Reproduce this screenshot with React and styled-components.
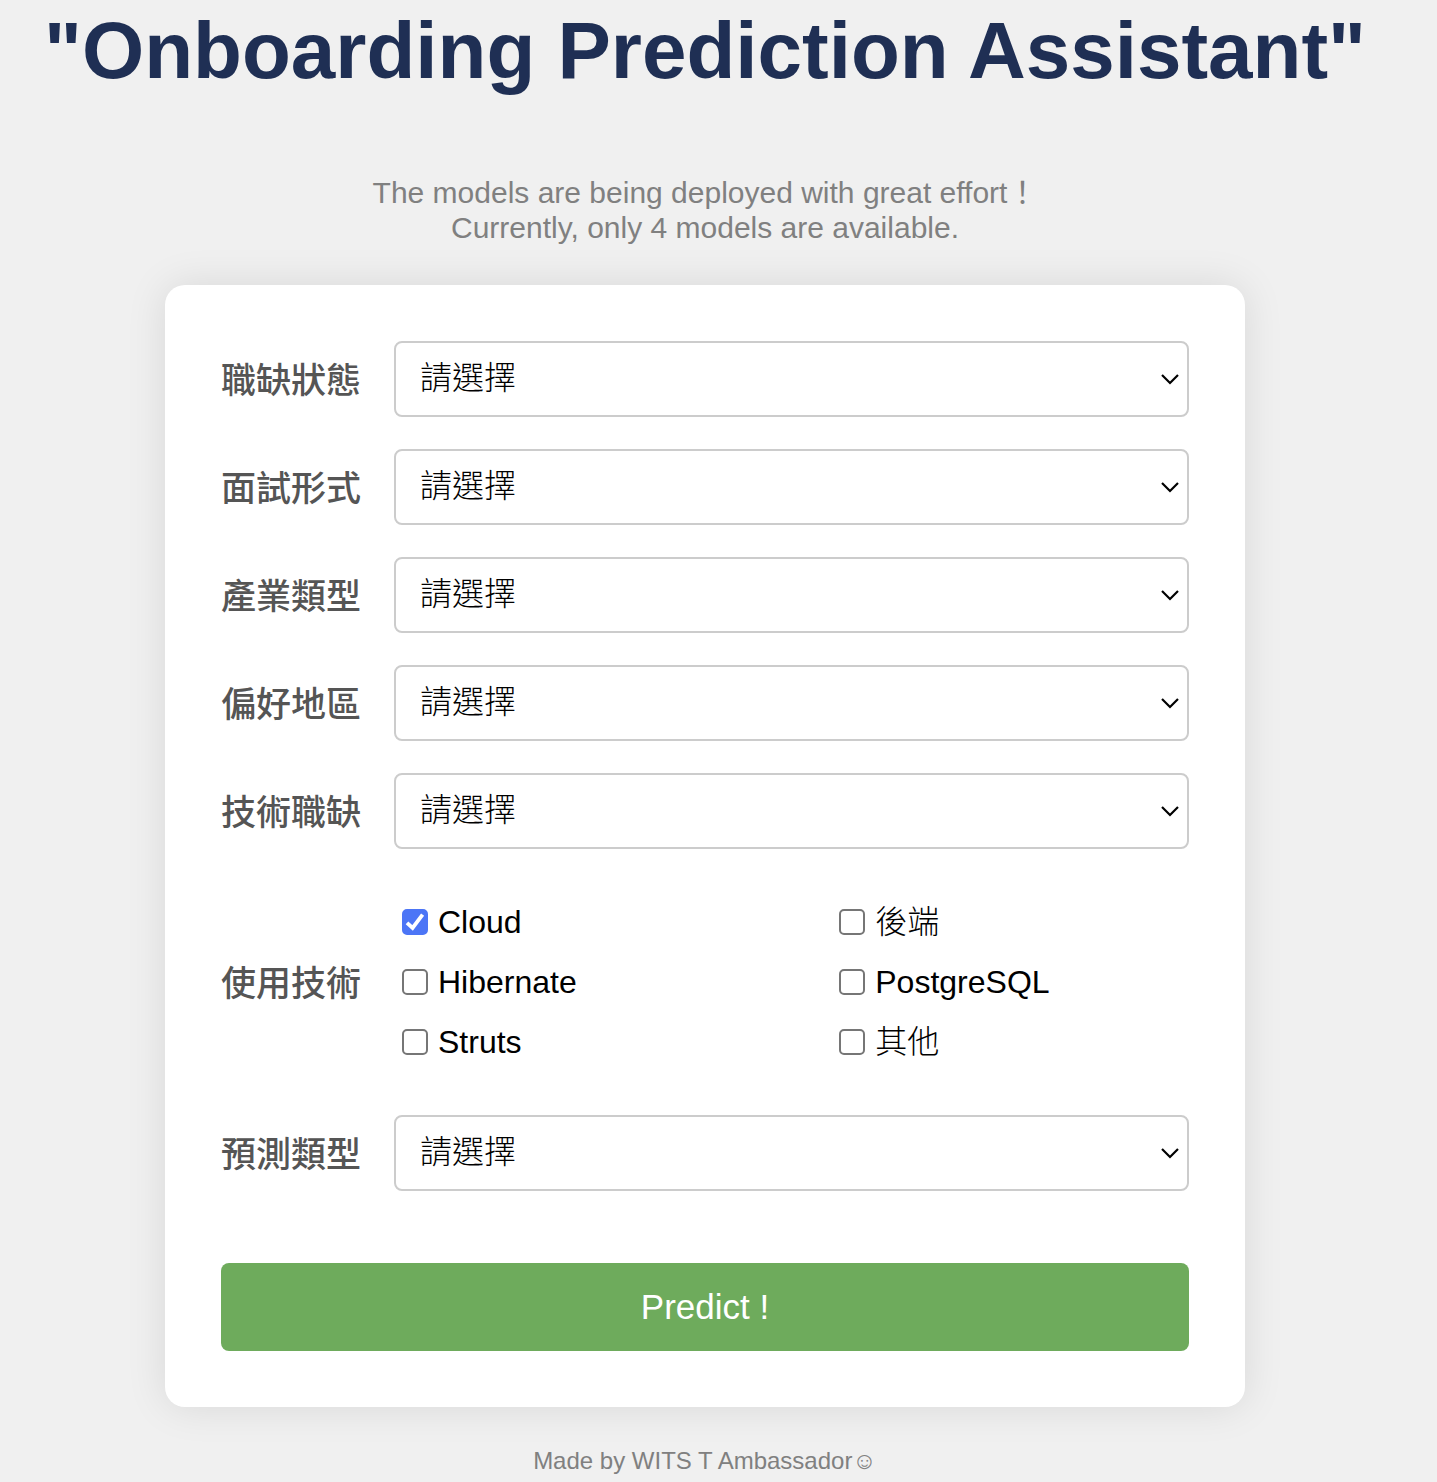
import React, { useState } from "react";
import styled, { createGlobalStyle } from "styled-components";

const GlobalStyle = createGlobalStyle`
  *, *::before, *::after { box-sizing: border-box; }
  body {
    margin: 0;
    background: #f0f0f0;
    color: #000;
    font-family: Arial, "Liberation Sans", "Noto Sans CJK TC", sans-serif;
  }
`;

const Page = styled.div`
  display: flex;
  flex-direction: column;
  align-items: center;
  padding: 5px 27px 0 0;
`;

const Title = styled.h1`
  margin: 0;
  color: #1f2f54;
  font-size: 80px;
  font-weight: 700;
  line-height: 92px;
  text-align: center;
`;

const Notice = styled.p`
  margin: 78px 0 40px;
  color: #808080;
  font-size: 30px;
  line-height: 35px;
  text-align: center;
`;

const Card = styled.form`
  display: flex;
  flex-direction: column;
  gap: 32px;
  width: 100%;
  max-width: 1080px;
  padding: 56px;
  background: #fff;
  border-radius: 20px;
  box-shadow: 0 0 40px rgba(0, 0, 0, 0.1);
`;

const Row = styled.div`
  display: grid;
  grid-template-columns: 173px minmax(0, 1fr);
  align-items: center;
`;

const Label = styled.label`
  padding-top: 4px;
  color: #555;
  font-size: 35px;
  font-weight: 500;
  line-height: 40px;
`;

const SelectBox = styled.div`
  position: relative;
`;

const Select = styled.select`
  display: block;
  width: 100%;
  height: 76px;
  padding: 0 24px 2px;
  appearance: none;
  color: #000;
  background: #fff;
  border: 2px solid #ccc;
  border-radius: 8px;
  font-family: inherit;
  font-size: 32px;
  font-weight: 300;
`;

const Chevron = styled.svg`
  position: absolute;
  top: 50%;
  right: 9px;
  width: 20px;
  height: 12px;
  margin-top: -6px;
  pointer-events: none;
`;

const Options = styled.div`
  display: grid;
  grid-template-columns: 55% 45%;
  padding: 11px 0;
`;

const Option = styled.label`
  display: flex;
  align-items: center;
  gap: 10px;
  height: 60px;
  padding-left: 8px;
  font-size: 32px;
  font-weight: 300;
  line-height: 38px;
`;

const Tick = styled.span`
  display: grid;
  flex: none;
  width: 26px;
  height: 26px;

  > * { grid-area: 1 / 1; }
`;

const Checkbox = styled.input`
  width: 26px;
  height: 26px;
  margin: 0;
  appearance: none;
  background: #fff;
  border: 2px solid #767676;
  border-radius: 5px;

  &:checked {
    background: #4c75f6;
    border-color: #4c75f6;
  }
`;

const TickMark = styled.svg`
  width: 26px;
  height: 26px;
  pointer-events: none;
`;

const Submit = styled.button`
  height: 88px;
  margin-top: 40px;
  color: #fff;
  background: #6eab5c;
  border: 0;
  border-radius: 8px;
  font-family: inherit;
  font-size: 35px;
  cursor: pointer;
`;

const Footer = styled.footer`
  margin-top: 40px;
  color: #808080;
  font-size: 24px;
  line-height: 28px;
`;

function SelectRow({ id, label }) {
  return (
    <Row>
      <Label htmlFor={id}>{label}</Label>
      <SelectBox>
        <Select id={id} defaultValue="">
          <option value="">請選擇</option>
        </Select>
        <Chevron viewBox="0 0 20 12" aria-hidden="true">
          <path d="M2 2l8 8 8-8" fill="none" stroke="#000" strokeWidth="2.2" />
        </Chevron>
      </SelectBox>
    </Row>
  );
}

function TechOption({ name, initial }) {
  const [checked, setChecked] = useState(initial);
  return (
    <Option>
      <Tick>
        <Checkbox
          type="checkbox"
          checked={checked}
          onChange={(e) => setChecked(e.target.checked)}
        />
        {checked && (
          <TickMark viewBox="0 0 26 26" aria-hidden="true">
            <path d="M5 13.8l5.6 5.2L20.6 5.6" fill="none" stroke="#fff" strokeWidth="3.8" />
          </TickMark>
        )}
      </Tick>
      {name}
    </Option>
  );
}

const FIELDS = [
  ["status", "職缺狀態"],
  ["interview", "面試形式"],
  ["industry", "產業類型"],
  ["region", "偏好地區"],
  ["position", "技術職缺"],
];

const TECHS = ["Cloud", "後端", "Hibernate", "PostgreSQL", "Struts", "其他"];

export default function App() {
  return (
    <>
      <GlobalStyle />
      <Page>
        <Title>"Onboarding Prediction Assistant"</Title>
        <Notice>
          The models are being deployed with great effort！
          <br />
          Currently, only 4 models are available.
        </Notice>
        <Card onSubmit={(e) => e.preventDefault()}>
          {FIELDS.map(([id, label]) => (
            <SelectRow key={id} id={id} label={label} />
          ))}
          <Row role="group" aria-labelledby="tech">
            <Label as="span" id="tech">使用技術</Label>
            <Options>
              {TECHS.map((name) => (
                <TechOption key={name} name={name} initial={name === "Cloud"} />
              ))}
            </Options>
          </Row>
          <SelectRow id="prediction" label="預測類型" />
          <Submit type="submit">Predict !</Submit>
        </Card>
        <Footer>Made by WITS T Ambassador☺</Footer>
      </Page>
    </>
  );
}
